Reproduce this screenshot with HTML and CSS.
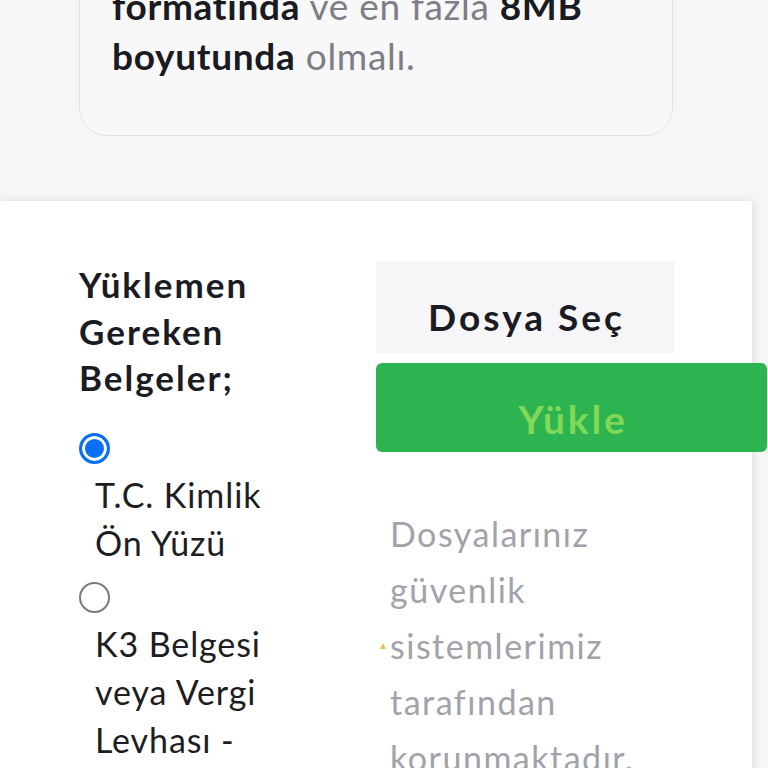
FILE: index.html
```html
<!DOCTYPE html>
<html lang="tr">
<head>
<meta charset="utf-8">
<title>Belge Yükleme</title>
<link rel="stylesheet" href="styles.css">
</head>
<body>
  <div class="info-card">
    <p class="info-text"><span class="muted">Yükleyeceğin belgeler</span> <b>PDF, JPG</b><br><b>formatında</b> <span class="muted">ve en fazla</span> <b>8MB</b><br><b>boyutunda</b> <span class="muted">olmalı.</span></p>
  </div>

  <section class="upload-panel">
    <div class="doc-col">
      <h2 class="doc-title">Yüklemen Gereken Belgeler;</h2>
      <div class="option">
        <input class="radio" type="radio" name="doc" id="d1" checked>
        <label class="option-label" for="d1">T.C. Kimlik Ön Yüzü</label>
      </div>
      <div class="option">
        <input class="radio" type="radio" name="doc" id="d2">
        <label class="option-label" for="d2">K3 Belgesi veya Vergi Levhası - İmza Sirküleri</label>
      </div>
    </div>
    <div class="file-col">
      <div class="choose-box">Dosya Seç</div>
      <button class="upload-btn" type="button">Yükle</button>
      <div class="secure-note">
        <span class="marker"></span>
        Dosyalarınız güvenlik sistemlerimiz tarafından korunmaktadır.
      </div>
    </div>
  </section>
</body>
</html>
```

FILE: styles.css
```css
html, body {
  margin: 0;
  padding: 0;
}
body {
  background: #f6f6f6;
  font-family: Lato, "Open Sans", "Liberation Sans", sans-serif;
  height: 768px;
  overflow: hidden;
}

.info-card {
  margin: -103px 95px 0 79px;
  padding: 33px 20px 54px 32px;
  border: 1px solid #e2e2e4;
  border-radius: 28px;
  background: #f8f8f8;
}
.info-text {
  margin: 0;
  font-size: 37px;
  line-height: 50px;
  letter-spacing: 0.7px;
  color: #1a1a22;
  white-space: nowrap;
}
.info-text b { font-weight: 700; }
.info-text .muted { color: #7e7e88; }

.upload-panel {
  margin-top: 65px;
  width: 752px;
  min-height: 700px;
  background: #fff;
  box-shadow: 2px 0 8px rgba(0,0,0,0.10);
  box-sizing: border-box;
  padding: 60px 0 0 79px;
  display: grid;
  grid-template-columns: 221px 298px;
  column-gap: 76px;
  align-items: start;
}

.doc-title {
  margin: 0 0 32px;
  font-size: 35px;
  line-height: 46.5px;
  letter-spacing: 2px;
  font-weight: 700;
  color: #1b1b24;
}
.option { margin-bottom: 15px; }
.radio {
  appearance: none;
  -webkit-appearance: none;
  display: block;
  margin: 0 0 7px 0;
  width: 31px;
  height: 31px;
  border-radius: 50%;
  border: 2px solid #7a7a7a;
  background: #fff;
  box-sizing: border-box;
}
.radio:checked {
  border: 3px solid #0b6ff4;
  box-shadow: inset 0 0 0 3px #fff;
  background: #0b6ff4;
}
.option-label {
  display: block;
  padding-left: 16px;
  font-size: 34px;
  line-height: 48px;
  letter-spacing: 0.9px;
  color: #1d1d22;
}

.choose-box {
  background: #f6f6f8;
  height: 92px;
  box-sizing: border-box;
  padding: 33px 0 0 3px;
  text-align: center;
  font-size: 37px;
  line-height: 46px;
  letter-spacing: 3px;
  font-weight: 700;
  color: #1b1b24;
}
.upload-btn {
  display: block;
  margin-top: 10px;
  width: 391px;
  height: 89px;
  border: none;
  border-radius: 6px;
  background: #2db34f;
  color: #7fd858;
  font-family: inherit;
  font-size: 39px;
  font-weight: 700;
  letter-spacing: 2.8px;
  padding: 23px 0 0 3px;
}
.secure-note {
  position: relative;
  margin-top: 54px;
  padding-left: 14px;
  font-size: 34px;
  line-height: 56px;
  letter-spacing: 1.5px;
  color: #a2a2aa;
}
.marker {
  position: absolute;
  left: 4px;
  top: 137px;
  width: 0;
  height: 0;
  border-left: 3.5px solid transparent;
  border-right: 3.5px solid transparent;
  border-bottom: 6px solid #e6c04d;
}
```
